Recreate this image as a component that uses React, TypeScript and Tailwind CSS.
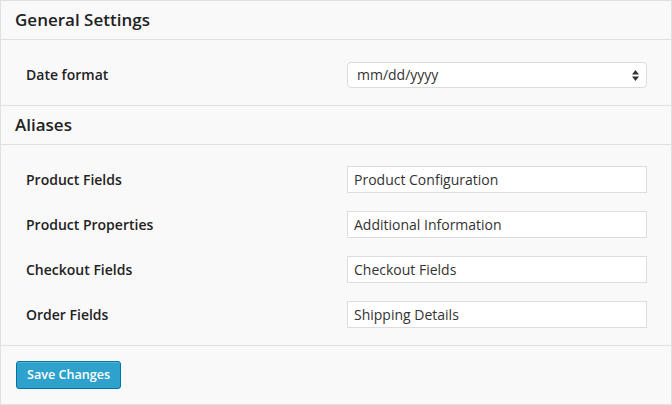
import React from 'react';

const aliases = [
  { label: 'Product Fields', value: 'Product Configuration' },
  { label: 'Product Properties', value: 'Additional Information' },
  { label: 'Checkout Fields', value: 'Checkout Fields' },
  { label: 'Order Fields', value: 'Shipping Details' },
];

function SectionTitle({ children }: { children: React.ReactNode }) {
  return (
    <div className="h-[39px] flex items-center px-[14px] border-b border-[#e1e1e1] text-[17px] font-semibold text-[#222]">
      {children}
    </div>
  );
}

function Row({ label, children }: { label: string; children: React.ReactNode }) {
  return (
    <div className="h-[45px] flex items-center">
      <div className="w-[346px] pl-[25px] text-[14px] font-semibold text-[#222]">{label}</div>
      {children}
    </div>
  );
}

export default function App() {
  return (
    <div
      className="w-[672px] h-[405px] bg-[#f9f9f9] border border-[#e1e1e1] flex flex-col"
      style={{ fontFamily: '"Open Sans", "Noto Sans", sans-serif' }}
    >
      <SectionTitle>General Settings</SectionTitle>
      <div className="pt-3 pb-2 border-b border-[#e1e1e1]">
        <Row label="Date format">
          <div className="relative w-[300px] h-[26px] bg-white border border-[#dcdcdc] rounded-[4px] flex items-center pl-[9px] text-[14px] text-[#333]">
            mm/dd/yyyy
            <svg className="absolute right-[7px] top-[7px]" width="7" height="11" viewBox="0 0 7 11">
              <path d="M3.5 0 L7 4.5 L0 4.5 Z" fill="#333" />
              <path d="M3.5 11 L7 6.5 L0 6.5 Z" fill="#333" />
            </svg>
          </div>
        </Row>
      </div>
      <SectionTitle>Aliases</SectionTitle>
      <div className="pt-3 pb-2 border-b border-[#e1e1e1]">
        {aliases.map((a) => (
          <Row key={a.label} label={a.label}>
            <div className="w-[300px] h-[27px] bg-white border border-[#dddddd] flex items-center pl-[6px] text-[14px] text-[#333]">
              {a.value}
            </div>
          </Row>
        ))}
      </div>
      <div className="pt-[15px] px-[15px]">
        <button className="h-[28px] px-[10px] bg-[#2ea2cc] border border-[#0074a2] rounded-[3px] text-white text-[12.6px] font-semibold shadow-[inset_0_1px_0_rgba(120,200,230,0.5)]">
          Save Changes
        </button>
      </div>
    </div>
  );
}
